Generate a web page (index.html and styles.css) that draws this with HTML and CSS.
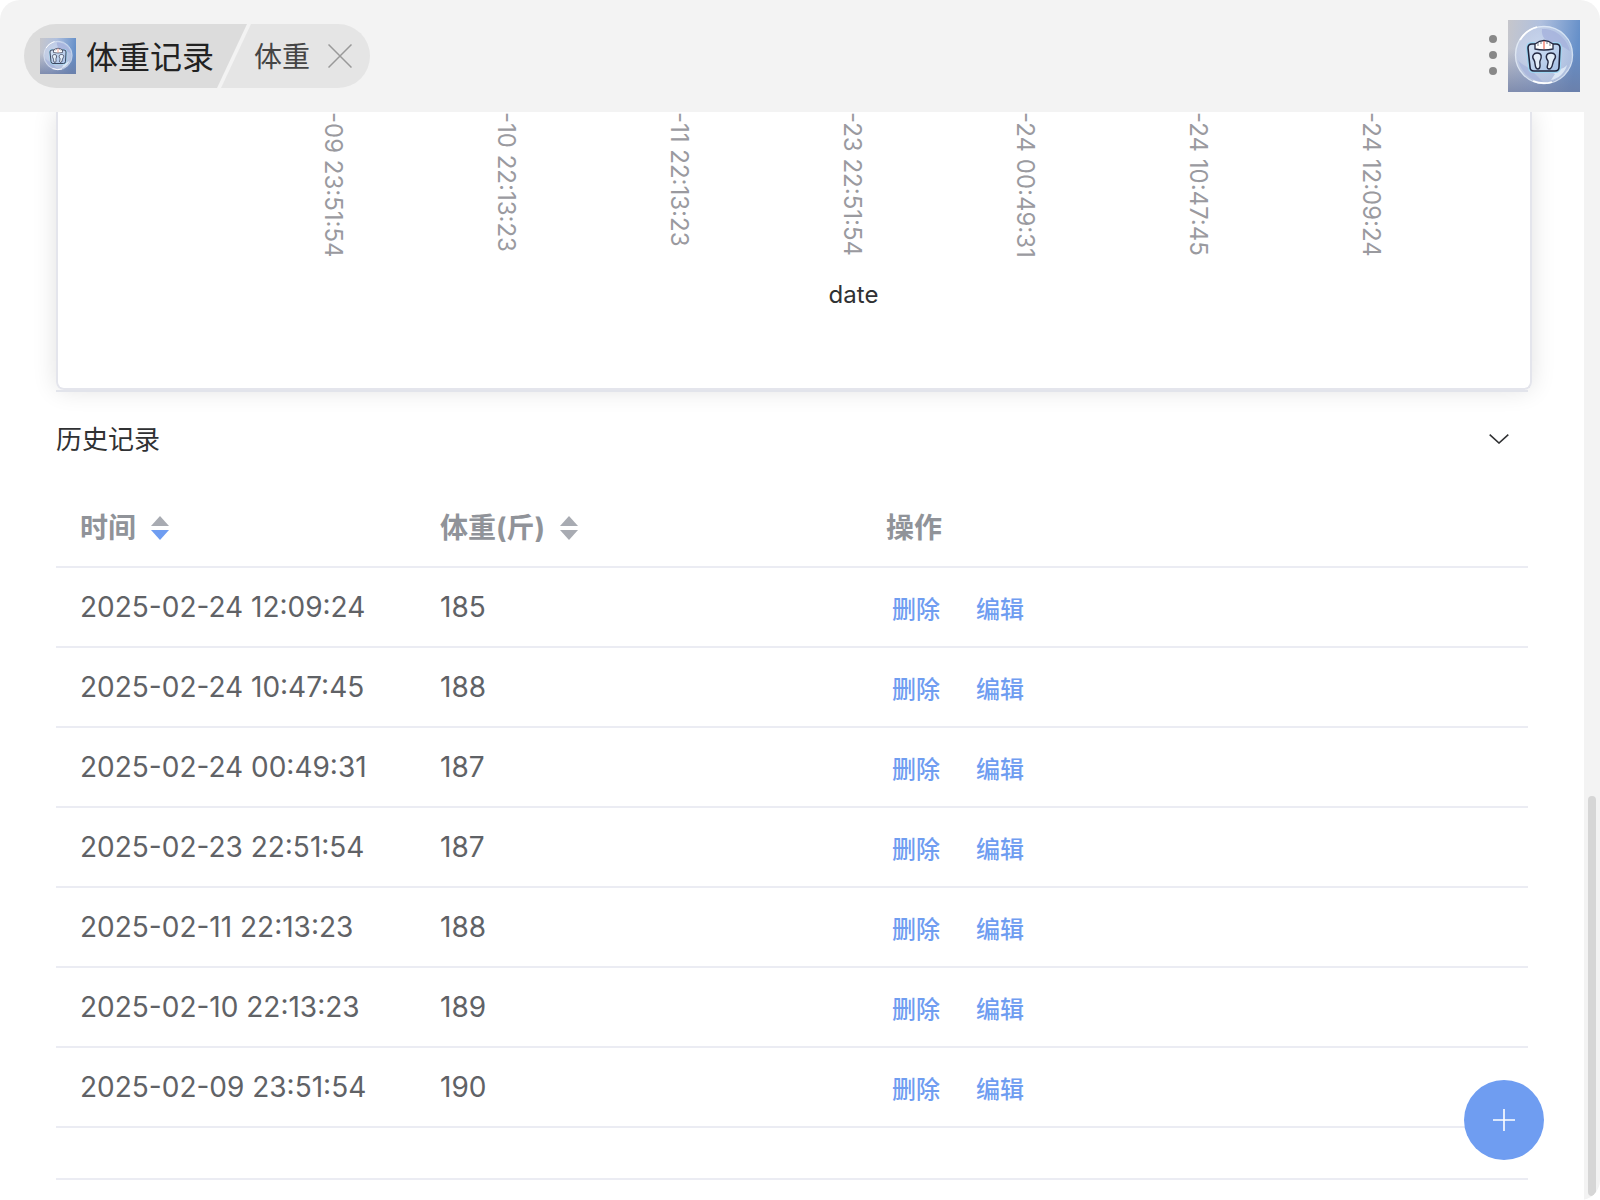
FILE: index.html
```html
<!DOCTYPE html>
<html lang="zh-CN">
<head>
<meta charset="utf-8">
<title>体重记录</title>
<link rel="stylesheet" href="styles.css">
</head>
<body>
<svg class="defs" aria-hidden="true">
  <defs>
    <linearGradient id="sky" x1="0" y1="0" x2="1" y2="0.15">
      <stop offset="0" stop-color="#c6c6cb"/>
      <stop offset="0.45" stop-color="#b0c0de"/>
      <stop offset="1" stop-color="#6690c9"/>
    </linearGradient>
    <linearGradient id="dusk" x1="0" y1="0" x2="0" y2="1">
      <stop offset="0.4" stop-color="#6c7ba2" stop-opacity="0"/>
      <stop offset="1" stop-color="#6c7ba2" stop-opacity="0.75"/>
    </linearGradient>
    <radialGradient id="bubble">
      <stop offset="0" stop-color="#d8e5f6"/>
      <stop offset="1" stop-color="#c3cfe9"/>
    </radialGradient>
    <linearGradient id="plate" x1="0" y1="0" x2="1" y2="1">
      <stop offset="0" stop-color="#d7e4f5"/>
      <stop offset="1" stop-color="#a5c0e6"/>
    </linearGradient>
    <symbol id="scale" viewBox="0 0 72 72">
      <rect width="72" height="72" fill="url(#sky)"/>
      <rect width="72" height="72" fill="url(#dusk)"/>
      <circle cx="36" cy="35" r="28" fill="url(#bubble)" fill-opacity="0.75"/>
      <path d="M34 9C47 8 59 18 62 31C57 28 53 25 46 24C38 22 33 17 34 9Z" fill="#a5b2dc" fill-opacity="0.8"/>
      <path d="M10 40C14 54 24 61 35 62C29 56 24 50 19 47C15 45 12 43 10 40Z" fill="#a3b1da" fill-opacity="0.65"/>
      <path d="M43 52C50 49 55 50 59 45C57 53 50 59 43 60L47 54Z" fill="#e8f1fb" fill-opacity="0.75"/>
      <circle cx="36" cy="35" r="28.5" fill="none" stroke="#e9f1fb" stroke-opacity="0.8" stroke-width="1.4"/>
      <path d="M12 20A28.500 28.500 0 0 1 29 7M25 61A28.500 28.500 0 0 0 44 62" fill="none" stroke="#fff" stroke-width="1.8"/>
      <path d="M27 24H24Q20 24 20 28L22 47Q22 51 26 51H47Q51 51 51 47L52 28Q52 24 48 24H45" fill="none" stroke="#9ed5f1" stroke-width="4"/>
      <path d="M27 24H24Q20 24 20 28L22 47Q22 51 26 51H47Q51 51 51 47L52 28Q52 24 48 24Z" fill="url(#plate)" stroke="#20243c" stroke-width="1.6"/>
      <path d="M27 29V24Q36 17 45 24V29Q36 31 27 29Z" fill="#fff" stroke="#252a43" stroke-width="1.3"/>
      <path d="M30 23V26M33 22V24M39 22V24M42 23V26" stroke="#6c7384" stroke-width="0.9"/>
      <path d="M36 21V29" stroke="#ef5c47" stroke-width="1.1"/>
      <path d="M29 33C34 33 34 37 32 41C31 43 34 48 30 49C26 49 28 43 26 40C23 36 26 33 29 33ZM43 33C38 33 37 37 40 41C41 44 37 48 41 49C45 49 44 43 46 40C49 36 47 33 43 33Z" fill="#e3edf8" stroke="#252a43" stroke-width="1.4"/>
    </symbol>
  </defs>
</svg>

<div class="app">
  <header class="topbar">
    <nav class="crumbs" aria-label="导航">
      <a class="crumb crumb-home" href="#">
        <svg class="crumb-icon" aria-hidden="true"><use href="#scale"/></svg>
        <span class="crumb-text">体重记录</span>
      </a>
      <div class="crumb crumb-page">
        <span class="crumb-text">体重</span>
        <button class="close" type="button" aria-label="关闭">
          <svg width="24" height="24" viewBox="0 0 24 24" fill="none" stroke="#999" stroke-width="1.5"><path d="M0.500 0.500L23.500 23.500M23.500 0.500L0.500 23.500"/></svg>
        </button>
      </div>
    </nav>
    <div class="tools">
      <button class="more" type="button" aria-label="更多">
        <svg width="8" height="40" viewBox="0 0 8 40" fill="#888"><circle cx="4" cy="4" r="4"/><circle cx="4" cy="20" r="4"/><circle cx="4" cy="36" r="4"/></svg>
      </button>
      <svg class="avatar" role="img" aria-label="体重秤"><use href="#scale"/></svg>
    </div>
  </header>

  <div class="viewport">
    <main class="content">
      <section class="chart">
        <div class="axis">
          <span>-09 23:51:54</span>
          <span>-10 22:13:23</span>
          <span>-11 22:13:23</span>
          <span>-23 22:51:54</span>
          <span>-24 00:49:31</span>
          <span>-24 10:47:45</span>
          <span>-24 12:09:24</span>
        </div>
        <div class="axis-name">date</div>
      </section>

      <section class="history">
        <button class="history-head" type="button" aria-expanded="true">
          <span class="history-title">历史记录</span>
          <svg width="20" height="10" viewBox="0 0 20 10" fill="none" stroke="#303133" stroke-width="1.600"><path d="M0.700 0.700L10 9L19.300 0.700"/></svg>
        </button>
        <table class="records">
          <colgroup><col class="col-time"><col class="col-weight"><col></colgroup>
          <thead>
            <tr>
              <th scope="col"><span class="th">时间<svg class="sort" viewBox="0 0 18 24"><path d="M0 10L9 0L18 10Z" fill="#a8abb2"/><path d="M0 14L9 24L18 14Z" fill="#6f9df1"/></svg></span></th>
              <th scope="col"><span class="th">体重(斤)<svg class="sort" viewBox="0 0 18 24"><path d="M0 10L9 0L18 10Z" fill="#a8abb2"/><path d="M0 14L9 24L18 14Z" fill="#a8abb2"/></svg></span></th>
              <th scope="col">操作</th>
            </tr>
          </thead>
          <tbody>
            <tr><td>2025-02-24 12:09:24</td><td>185</td><td><div class="actions"><button type="button">删除</button><button type="button">编辑</button></div></td></tr>
            <tr><td>2025-02-24 10:47:45</td><td>188</td><td><div class="actions"><button type="button">删除</button><button type="button">编辑</button></div></td></tr>
            <tr><td>2025-02-24 00:49:31</td><td>187</td><td><div class="actions"><button type="button">删除</button><button type="button">编辑</button></div></td></tr>
            <tr><td>2025-02-23 22:51:54</td><td>187</td><td><div class="actions"><button type="button">删除</button><button type="button">编辑</button></div></td></tr>
            <tr><td>2025-02-11 22:13:23</td><td>188</td><td><div class="actions"><button type="button">删除</button><button type="button">编辑</button></div></td></tr>
            <tr><td>2025-02-10 22:13:23</td><td>189</td><td><div class="actions"><button type="button">删除</button><button type="button">编辑</button></div></td></tr>
            <tr><td>2025-02-09 23:51:54</td><td>190</td><td><div class="actions"><button type="button">删除</button><button type="button">编辑</button></div></td></tr>
          </tbody>
        </table>
      </section>
    </main>
    <div class="scroll-track"><div class="scroll-thumb"></div></div>
  </div>

  <button class="add" type="button" aria-label="新增">
    <svg width="24" height="24" viewBox="0 0 24 24" stroke="#fff" stroke-width="1.600"><path d="M12 1V23M1 12H23"/></svg>
  </button>
</div>
</body>
</html>
```

FILE: styles.css
```css
* { box-sizing: border-box; }

body {
  margin: 0;
  background: #fff;
  color: #303133;
  font-family: Inter, "Noto Sans CJK SC", sans-serif;
}

button {
  padding: 0;
  border: 0;
  background: none;
  color: inherit;
  font: inherit;
  cursor: pointer;
}

svg { display: block; }

.defs {
  position: absolute;
  width: 0;
  height: 0;
}

.app {
  position: relative;
  display: flex;
  flex-direction: column;
  height: 100vh;
  overflow: hidden;
  border-radius: 0 0 20px 0;
}

/* Title bar */

.topbar {
  position: relative;
  z-index: 1;
  display: flex;
  flex: none;
  align-items: center;
  justify-content: space-between;
  height: 112px;
  padding: 0 20px 0 24px;
  border-radius: 20px 20px 0 0;
  background: #f3f3f3;
}

.crumbs {
  display: flex;
  overflow: hidden;
  height: 64px;
  border-radius: 32px;
}

.crumb {
  display: flex;
  align-items: center;
  white-space: nowrap;
}

.crumb-text {
  padding-bottom: 3px;
}

.crumb-home {
  gap: 10px;
  padding: 0 33px 0 16px;
  background: #dcdcdc;
  color: #222;
  font-size: 32px;
  text-decoration: none;
  clip-path: polygon(0 0, 100% 0, calc(100% - 30px) 100%, 0 100%);
}

.crumb-icon {
  width: 36px;
  height: 36px;
}

.crumb-page {
  gap: 18px;
  margin-left: -26px;
  padding: 0 18px 0 33px;
  background: #e5e5e5;
  color: #444;
  font-size: 28px;
  clip-path: polygon(30px 0, 100% 0, 100% 100%, 0 100%);
}

.tools {
  display: flex;
  align-items: center;
  gap: 11px;
}

.more {
  padding-bottom: 2px;
}

.avatar {
  width: 72px;
  height: 72px;
}

/* Scrolling area */

.viewport {
  display: grid;
  flex: 1;
  grid-template-columns: 1fr 16px;
  min-height: 0;
}

.content {
  overflow: hidden;
  padding: 0 56px;
}

.scroll-track {
  padding: 684px 4px 4px;
  background: #f3f3f3;
}

.scroll-thumb {
  height: 100%;
  border-radius: 4px;
  background: #d6d6d6;
}

/* Chart card */

.chart {
  margin-right: -4px;
  padding: 0 73px 77px 188px;
  border: solid #e4e5ec;
  border-width: 0 2px 2px;
  border-radius: 0 0 8px 8px;
  box-shadow: 0 0 24px rgba(0, 0, 0, 0.12);
}

.axis {
  display: grid;
  grid-template-columns: repeat(7, 1fr);
  justify-items: center;
  height: 167px;
  color: #9a9a9f;
  font-size: 24px;
  line-height: 24px;
}

.axis span {
  white-space: nowrap;
  writing-mode: vertical-rl;
}

.axis-name {
  padding-left: 4px;
  font-size: 24px;
  line-height: 32px;
  text-align: center;
}

/* History panel */

.history {
  padding-bottom: 50px;
  border-top: 2px solid #e2e4eb;
  border-bottom: 2px solid #ebecf3;
}

.history-head {
  display: flex;
  align-items: center;
  justify-content: space-between;
  width: 100%;
  height: 96px;
  padding: 0 19px 2px 0;
  font-size: 26px;
}

.history-title {
  padding-bottom: 4px;
}

.records {
  width: 100%;
  border-spacing: 0;
  table-layout: fixed;
  color: #606266;
  font-size: 28px;
  line-height: 32px;
}

.col-time { width: 360px; }
.col-weight { width: 446px; }

.records th,
.records td {
  height: 80px;
  padding: 0 24px;
  border-bottom: 2px solid #ebecf3;
  text-align: left;
  white-space: nowrap;
}

.records th {
  padding-top: 2px;
  color: #909399;
  font-weight: 700;
}

.th {
  display: flex;
  align-items: center;
  gap: 15px;
}

.sort {
  width: 18px;
  height: 24px;
}

.actions {
  display: flex;
  gap: 24px;
  padding-top: 6px;
  color: #6f9df1;
  font-size: 24px;
  font-weight: 500;
}

.actions button {
  padding: 0 6px;
}

/* Floating add button */

.add {
  position: absolute;
  right: 56px;
  bottom: 40px;
  display: flex;
  align-items: center;
  justify-content: center;
  width: 80px;
  height: 80px;
  border-radius: 50%;
  background: #6f9df1;
}
```
